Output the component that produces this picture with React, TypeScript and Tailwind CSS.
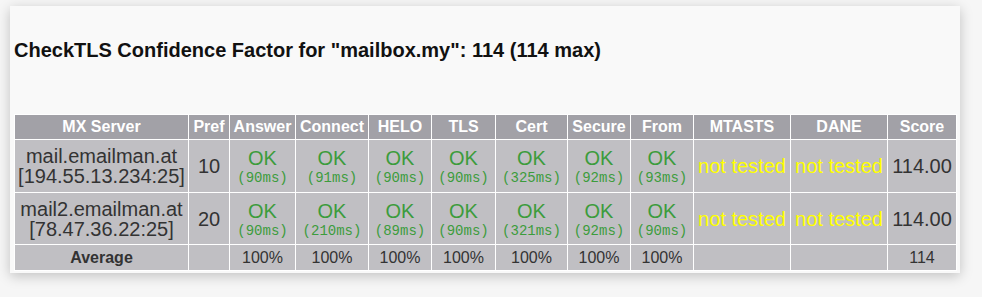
const rows = [
  {
    host: "mail.emailman.at",
    ip: "[194.55.13.234:25]",
    pref: "10",
    times: ["90ms", "91ms", "90ms", "90ms", "325ms", "92ms", "93ms"],
    score: "114.00",
    h: "h-[52px]",
  },
  {
    host: "mail2.emailman.at",
    ip: "[78.47.36.22:25]",
    pref: "20",
    times: ["90ms", "210ms", "89ms", "90ms", "321ms", "92ms", "90ms"],
    score: "114.00",
    h: "h-[51px]",
  },
];

const headers = [
  { label: "MX Server", w: "w-[173px]" },
  { label: "Pref", w: "w-[40px]" },
  { label: "Answer", w: "w-[65px]" },
  { label: "Connect", w: "w-[72px]" },
  { label: "HELO", w: "w-[62px]" },
  { label: "TLS", w: "w-[63px]" },
  { label: "Cert", w: "w-[71px]" },
  { label: "Secure", w: "w-[62px]" },
  { label: "From", w: "w-[62px]" },
  { label: "MTASTS", w: "w-[96px]" },
  { label: "DANE", w: "w-[96px]" },
  { label: "Score", w: "w-[68px]" },
];

const cell = "bg-[#c0bfc3] p-0 text-center align-middle";

export default function App() {
  return (
    <div className="min-h-[297px] bg-[#f6f6f6] pt-[6px] pl-[10px] font-['Liberation_Sans',Arial,sans-serif]">
      <div className="h-[267px] w-[950px] bg-[#f9f9f9] pt-[33px] pl-[4px] shadow-[0_3px_12px_rgba(0,0,0,0.22)]">
        <h3 className="text-[20px] font-bold leading-[22px] text-[#111]">
          CheckTLS Confidence Factor for "mailbox.my": 114 (114 max)
        </h3>

        <table className="mt-[53px] table-fixed border-separate border-spacing-[1px] bg-white">
          <thead>
            <tr className="h-[24px]">
              {headers.map((h) => (
                <th
                  key={h.label}
                  className={`${h.w} bg-[#a2a1a7] p-0 text-center text-[16px] font-bold leading-[18px] text-white`}
                >
                  {h.label}
                </th>
              ))}
            </tr>
          </thead>
          <tbody>
            {rows.map((r) => (
              <tr key={r.host} className={r.h}>
                <td className={`${cell} text-[20px] leading-[20px] text-[#333]`}>
                  {r.host}
                  <br />
                  {r.ip}
                </td>
                <td className={`${cell} text-[20px] text-[#333]`}>{r.pref}</td>
                {r.times.map((t, i) => (
                  <td key={i} className={cell}>
                    <div className="text-[20px] leading-[24px] text-[#3c9c3c]">OK</div>
                    <div className="font-['Liberation_Mono','Courier_New',monospace] text-[14px] leading-[16px] text-[#3c9c3c]">
                      ({t})
                    </div>
                  </td>
                ))}
                <td className={`${cell} text-[20px] text-[#ffff00]`}>not tested</td>
                <td className={`${cell} text-[20px] text-[#ffff00]`}>not tested</td>
                <td className={`${cell} text-[20px] text-[#333]`}>{r.score}</td>
              </tr>
            ))}
            <tr className="h-[25px]">
              <td className={`${cell} text-[16px] font-bold text-[#333]`}>Average</td>
              <td className={cell}></td>
              {Array.from({ length: 7 }).map((_, i) => (
                <td key={i} className={`${cell} text-[16px] text-[#333]`}>
                  100%
                </td>
              ))}
              <td className={cell}></td>
              <td className={cell}></td>
              <td className={`${cell} text-[16px] text-[#333]`}>114</td>
            </tr>
          </tbody>
        </table>
      </div>
    </div>
  );
}
